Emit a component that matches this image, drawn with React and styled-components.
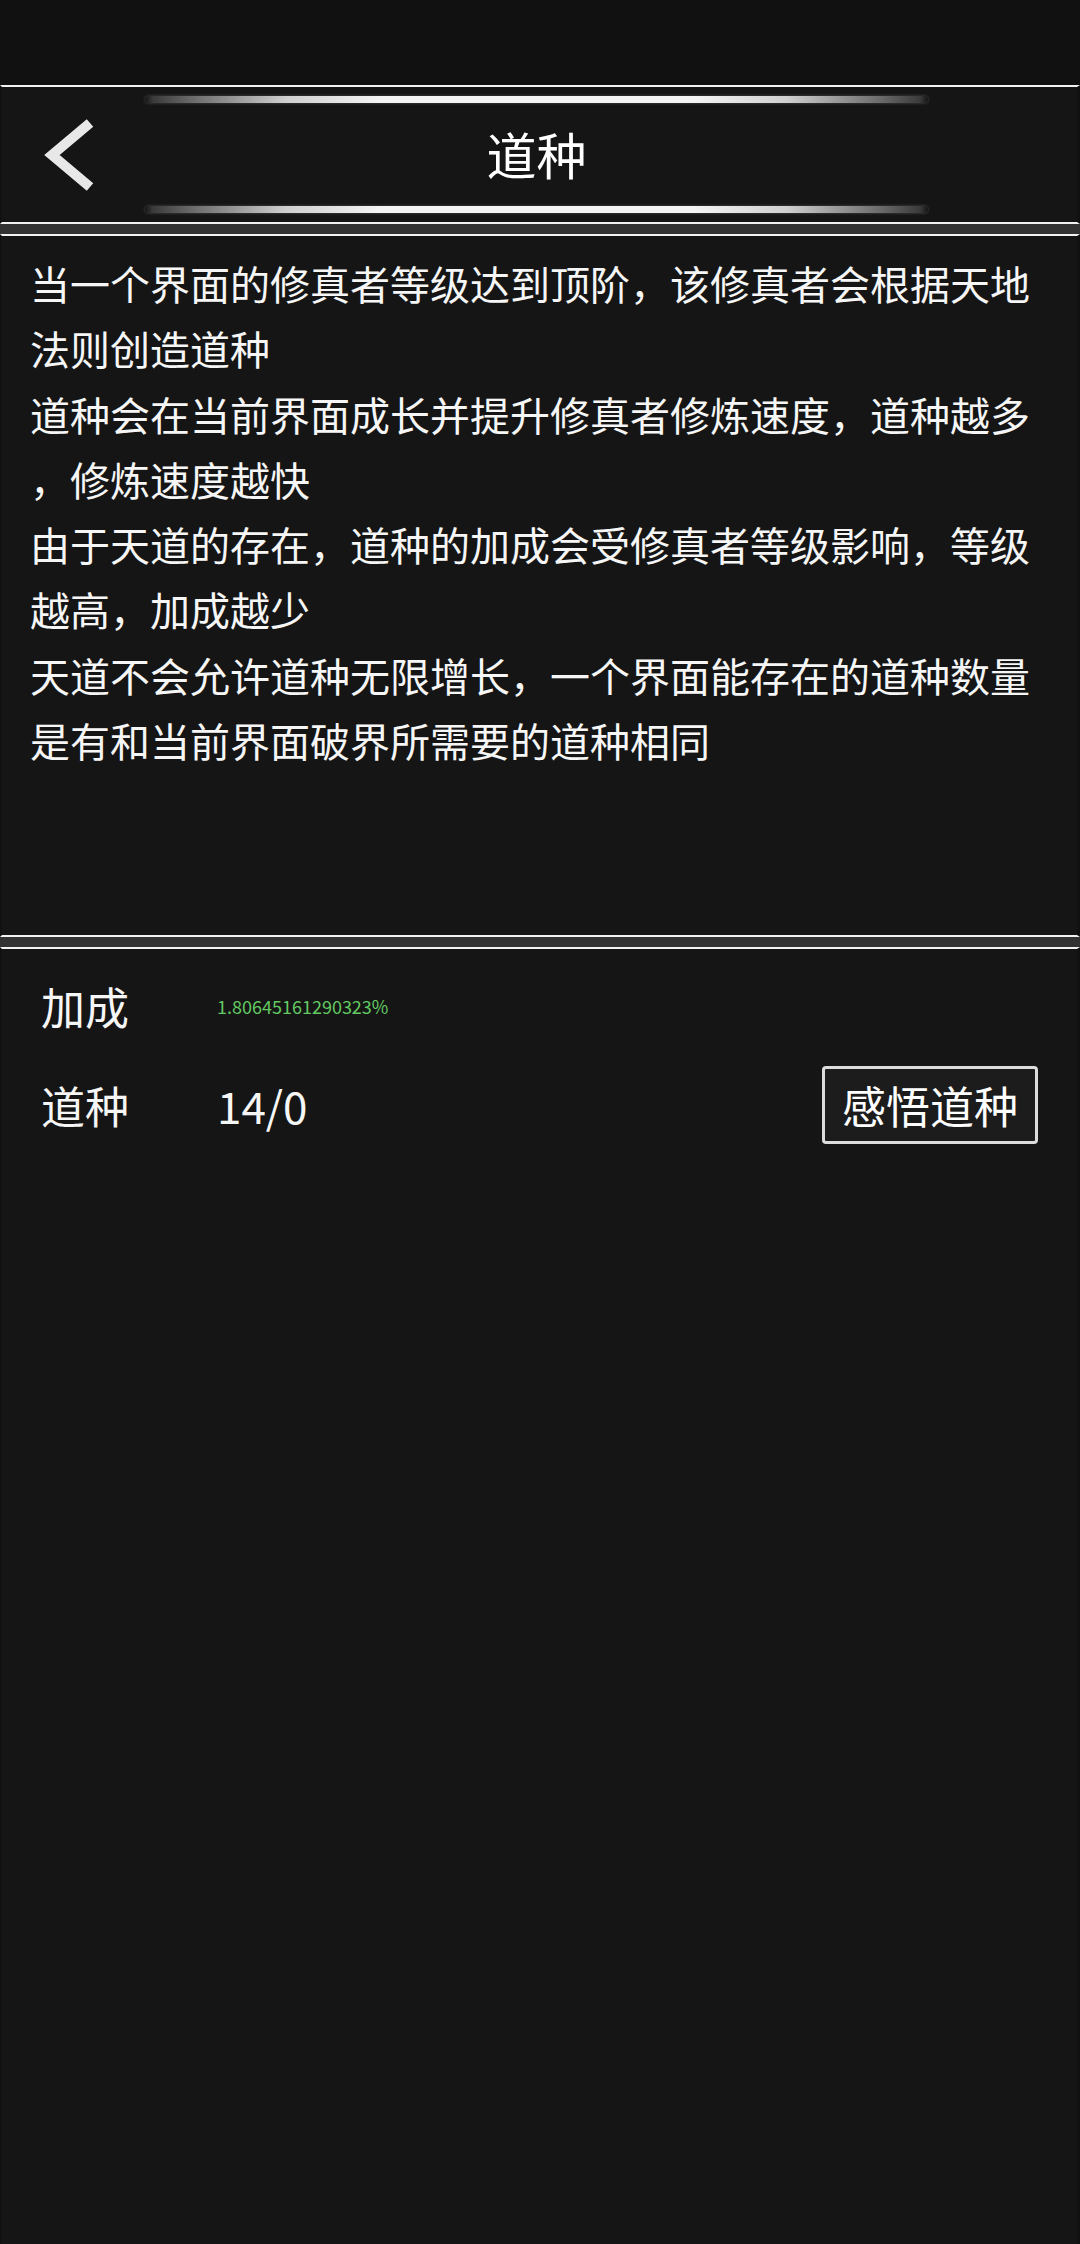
import React from "react";
import styled, { createGlobalStyle } from "styled-components";

const GlobalStyle = createGlobalStyle`
  html, body {
    margin: 0;
    padding: 0;
    background: #111111;
  }
  body {
    font-family: "Noto Sans CJK SC", "Noto Sans", sans-serif;
    color: #f4f4f4;
  }
  #root {
    min-height: 100vh;
    display: flex;
    flex-direction: column;
  }
`;

const Page = styled.div`
  flex: 1;
  display: flex;
  flex-direction: column;
  padding-top: 85px;
  background: #111111;
`;

const Panel = styled.section`
  background: #151515;
  border-top: 2px solid #f2f2f2;
  border-bottom: ${(p) => (p.$open ? "none" : "2px solid #f2f2f2")};
  border-left: 2px solid #111111;
  border-right: 3px solid #111111;
  flex: ${(p) => (p.$grow ? 1 : "none")};
  height: ${(p) => (p.$h ? `${p.$h}px` : "auto")};
  box-sizing: content-box;
`;

const Gap = styled.div`
  height: 10px;
  background: #333333;
`;

const Header = styled.header`
  display: grid;
  grid-template-columns: 143px 1fr 149px;
  grid-template-rows: auto 1fr auto;
  height: 135px;
`;

const Deco = styled.div`
  grid-column: 2;
  height: 7px;
  margin: ${(p) => (p.$bottom ? "0 0 9px" : "9px 0 0")};
  border-radius: 4px;
  background: linear-gradient(
    90deg,
    rgba(40, 40, 40, 0) 0%,
    #3a3a3a 1%,
    #6a6a6a 6%,
    #cfcfcf 18%,
    #f4f4f4 30%,
    #f4f4f4 70%,
    #cfcfcf 82%,
    #6a6a6a 94%,
    #3a3a3a 99%,
    rgba(40, 40, 40, 0) 100%
  );
  box-shadow: 0 0 3px rgba(255, 255, 255, 0.25);
`;

const BackButton = styled.button`
  grid-column: 1;
  grid-row: 1 / 4;
  align-self: center;
  justify-self: start;
  margin-left: 40px;
  padding: 0;
  border: none;
  background: transparent;
  width: 60px;
  height: 90px;
  display: flex;
  align-items: center;
  justify-content: center;
  cursor: pointer;
`;

const Title = styled.h1`
  grid-column: 2;
  grid-row: 2;
  margin: 0;
  align-self: center;
  justify-self: center;
  font-size: 50px;
  font-weight: 400;
  line-height: 1;
  color: #ffffff;
  transform: translateY(-2px);
`;

const Description = styled.div`
  padding: 15px 20px 0 28px;
  font-size: 40px;
  line-height: 65.3px;
  color: #f6f6f6;
`;

const Line = styled.div`
  white-space: nowrap;
`;

const Stats = styled.div`
  display: flex;
  flex-direction: column;
  gap: 19px;
  padding: 17px 39px 0 39px;
`;

const Row = styled.div`
  display: flex;
  align-items: center;
  height: 80px;
`;

const Label = styled.div`
  width: 176px;
  font-size: 44px;
  color: #f6f6f6;
  line-height: 1;
`;

const Value = styled.div`
  flex: 1;
  font-size: ${(p) => (p.$small ? "18px" : "44px")};
  color: ${(p) => (p.$small ? "#62c962" : "#f6f6f6")};
  line-height: 1;
`;

const ActionButton = styled.button`
  width: 216px;
  height: 78px;
  box-sizing: border-box;
  border: 3px solid #dcdcdc;
  border-radius: 4px;
  background: #1c1c1c;
  color: #ffffff;
  font-family: "Noto Sans CJK SC", "Noto Sans", sans-serif;
  font-size: 44px;
  line-height: 1;
  padding: 0;
  display: flex;
  align-items: center;
  justify-content: center;
  cursor: pointer;
`;

const lines = [
  "当一个界面的修真者等级达到顶阶，该修真者会根据天地",
  "法则创造道种",
  "道种会在当前界面成长并提升修真者修炼速度，道种越多",
  "，修炼速度越快",
  "由于天道的存在，道种的加成会受修真者等级影响，等级",
  "越高，加成越少",
  "天道不会允许道种无限增长，一个界面能存在的道种数量",
  "是有和当前界面破界所需要的道种相同",
];

export default function App() {
  return (
    <>
      <GlobalStyle />
      <Page>
        <Panel>
          <Header>
            <BackButton aria-label="返回">
              <svg width="60" height="90" viewBox="0 0 60 90">
                <polyline
                  points="48,13 10,45 48,77"
                  fill="none"
                  stroke="#e8e8e8"
                  strokeWidth="10"
                  strokeLinejoin="miter"
                  strokeLinecap="butt"
                />
              </svg>
            </BackButton>
            <Deco />
            <Title>道种</Title>
            <Deco $bottom />
          </Header>
        </Panel>
        <Gap />
        <Panel $h={699}>
          <Description>
            {lines.map((l, i) => (
              <Line key={i}>{l}</Line>
            ))}
          </Description>
        </Panel>
        <Gap />
        <Panel $grow $open>
          <Stats>
            <Row>
              <Label>加成</Label>
              <Value $small>1.80645161290323%</Value>
            </Row>
            <Row>
              <Label>道种</Label>
              <Value>14/0</Value>
              <ActionButton>感悟道种</ActionButton>
            </Row>
          </Stats>
        </Panel>
      </Page>
    </>
  );
}
